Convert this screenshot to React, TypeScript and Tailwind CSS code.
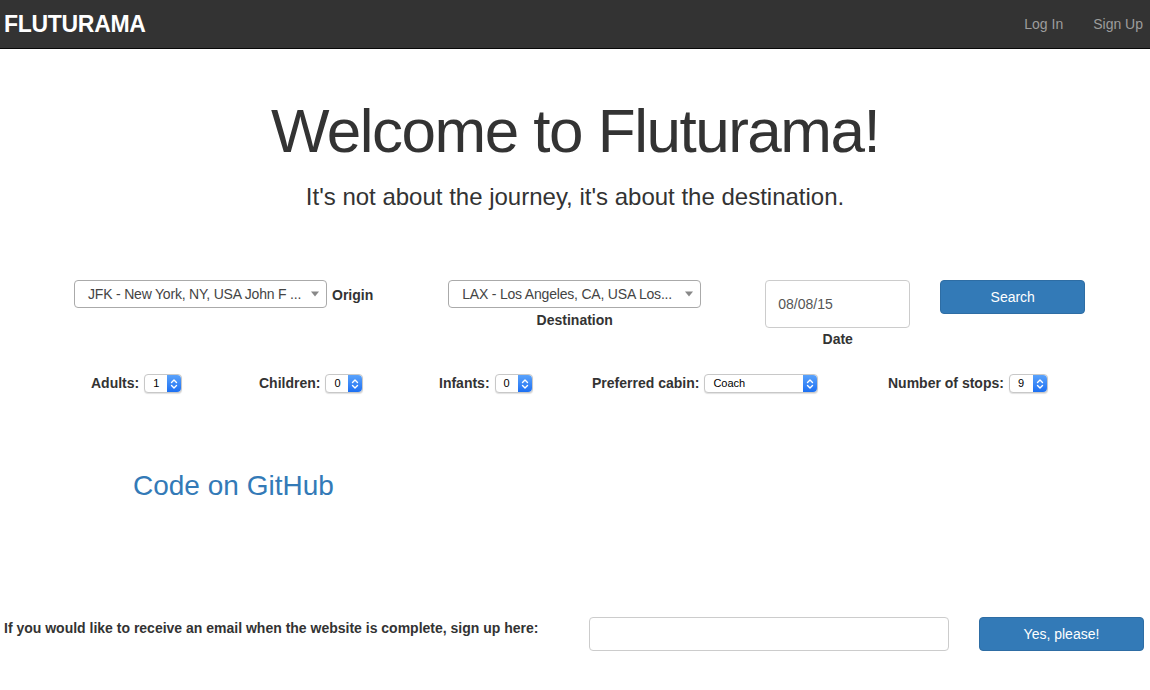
import React from "react";

const font = { fontFamily: '"Liberation Sans", Arial, sans-serif' };

function Stepper() {
  return (
    <span className="flex h-full w-[14px] items-center justify-center rounded-r-[4px] bg-gradient-to-b from-[#5aa2fb] to-[#1b6ff2]">
      <svg width="8" height="12" viewBox="0 0 8 12" fill="none" stroke="white" strokeWidth="1.4" strokeLinecap="round" strokeLinejoin="round">
        <path d="M1.5 4.5 L4 2 L6.5 4.5" />
        <path d="M1.5 7.5 L4 10 L6.5 7.5" />
      </svg>
    </span>
  );
}

function MiniSelect({ value, width }: { value: string; width: string }) {
  return (
    <span className={`ml-[5px] inline-flex h-[19px] items-center rounded-[4px] border border-[#c8c8c8] bg-white shadow-[0_1px_1px_rgba(0,0,0,0.12)] ${width}`}>
      <span className="flex-1 pl-[8px] text-[11px] font-normal text-black">{value}</span>
      <Stepper />
    </span>
  );
}

function BigSelect({ text }: { text: string }) {
  return (
    <div className="flex h-[28px] w-[253px] items-center rounded-[4px] border border-[#aaaaaa] bg-white pl-[13px] pr-[6px]">
      <span className="whitespace-nowrap text-[14px] tracking-[-0.2px] text-[#444]">{text}</span>
      <svg width="10" height="6" viewBox="0 0 10 6" className="ml-auto shrink-0">
        <path d="M1 0.5 L9 0.5 L5 5.5 Z" fill="#888" />
      </svg>
    </div>
  );
}

export default function App() {
  return (
    <div className="min-h-[690px] w-[1150px] bg-white text-[#333]" style={font}>
      <nav className="flex h-[49px] items-center justify-between border-b border-[#080808] bg-[#333333]">
        <span className="pl-[4px] text-[23px] font-bold tracking-[-0.3px] text-white">FLUTURAMA</span>
        <div className="flex items-center gap-[30px] pr-[7px] text-[14px] text-[#9d9d9d]">
          <span>Log In</span>
          <span>Sign Up</span>
        </div>
      </nav>

      <div className="flex flex-col items-center">
        <h1 className="mt-[42px] text-[62px] leading-[80px] tracking-[-1.5px] text-[#333]">Welcome to Fluturama!</h1>
        <p className="mt-[11px] text-[24px] leading-[30px] text-[#333]">It's not about the journey, it's about the destination.</p>
      </div>

      <div className="mt-[68px] flex items-start">
        <div className="ml-[74px] flex items-start">
          <BigSelect text="JFK - New York, NY, USA John F ..." />
          <span className="ml-[5px] mt-[5px] text-[14px] font-bold">Origin</span>
        </div>
        <div className="ml-[75px] flex flex-col items-center">
          <BigSelect text="LAX - Los Angeles, CA, USA Los..." />
          <span className="mt-[2px] text-[14px] font-bold leading-[20px]">Destination</span>
        </div>
        <div className="ml-[64px] flex flex-col items-center">
          <div className="flex h-[48px] w-[145px] items-center rounded-[4px] border border-[#cccccc] pl-[12px] text-[14px] text-[#555]">08/08/15</div>
          <span className="mt-[1px] text-[14px] font-bold leading-[20px]">Date</span>
        </div>
        <button className="ml-[30px] h-[34px] w-[145px] rounded-[4px] border border-[#2e6da4] bg-[#337ab7] text-[14px] text-white">Search</button>
      </div>

      <div className="mt-[24px] flex items-center pl-[91px] text-[14px] font-bold">
        <div className="flex w-[168px] items-center">Adults:<MiniSelect value="1" width="w-[38px]" /></div>
        <div className="flex w-[180px] items-center">Children:<MiniSelect value="0" width="w-[38px]" /></div>
        <div className="flex w-[153px] items-center">Infants:<MiniSelect value="0" width="w-[38px]" /></div>
        <div className="flex w-[296px] items-center">Preferred cabin:<MiniSelect value="Coach" width="w-[114px]" /></div>
        <div className="flex items-center">Number of stops:<MiniSelect value="9" width="w-[39px]" /></div>
      </div>

      <div className="ml-[133px] mt-[72px] text-[28px] leading-[40px] text-[#337ab7]">Code on GitHub</div>

      <div className="mt-[111px] flex items-start">
        <span className="ml-[4px] mt-[1px] w-[585px] text-[14px] font-bold leading-[20px]">If you would like to receive an email when the website is complete, sign up here:</span>
        <div className="h-[34px] w-[360px] rounded-[4px] border border-[#cccccc] bg-white" />
        <button className="ml-[30px] h-[34px] w-[165px] rounded-[4px] border border-[#2e6da4] bg-[#337ab7] text-[14px] text-white">Yes, please!</button>
      </div>
    </div>
  );
}
